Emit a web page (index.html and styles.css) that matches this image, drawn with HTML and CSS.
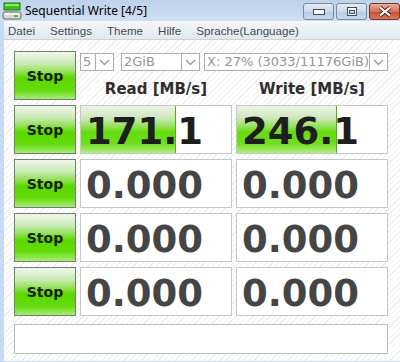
FILE: index.html
```html
<!DOCTYPE html>
<html lang="de">
<head>
    <meta charset="UTF-8">
    <title>Sequential Write [4/5]</title>
    <link rel="stylesheet" href="styles.css">
</head>
<body>
    <div class="titlebar">
        <svg class="app-icon" width="20" height="18" viewBox="0 0 20 18">
            <rect x="2" y="1" width="16" height="7" fill="#3cbf1c" stroke="#1f7a10"/>
            <rect x="3" y="2" width="14" height="2" fill="#8fe86a"/>
            <rect x="1" y="10" width="18" height="7" rx="2" fill="#d6d6d6" stroke="#6a6a6a"/>
            <rect x="2" y="11" width="16" height="2" fill="#f4f4f4"/>
            <rect x="12" y="13" width="4" height="2" fill="#3fcf20"/>
        </svg>
        <span class="title-text">Sequential Write [4/5]</span>
        <div class="winbtns">
            <div class="winbtn">
                <svg width="12" height="6" viewBox="0 0 12 6"><rect x="0.5" y="0.5" width="11" height="5" fill="#fff" stroke="#3b4a5e"/></svg>
            </div>
            <div class="winbtn">
                <svg width="10" height="9" viewBox="0 0 10 9"><rect x="0.5" y="0.5" width="9" height="8" fill="#fff" stroke="#3b4a5e"/><rect x="2.5" y="3.5" width="5" height="3" fill="#c9d7e8" stroke="#3b4a5e"/></svg>
            </div>
            <div class="winbtn close">
                <svg width="14" height="11" viewBox="0 0 14 11"><path d="M2 1.5 L12 9.5 M12 1.5 L2 9.5" stroke="#5a2018" stroke-width="4"/><path d="M2 1.5 L12 9.5 M12 1.5 L2 9.5" stroke="#fff" stroke-width="2.2"/></svg>
            </div>
        </div>
    </div>

    <div class="frame">
        <div class="menubar">
            <span>Datei</span>
            <span>Settings</span>
            <span>Theme</span>
            <span>Hilfe</span>
            <span>Sprache(Language)</span>
        </div>

        <div class="content">
            <div class="grid">
                <div class="stop">Stop</div>
                <div class="head">
                    <div class="combos">
                        <div class="combo c-count"><span class="combo-text">5</span><span class="combo-arrow"><svg width="11" height="7" viewBox="0 0 11 7"><path d="M1 1 L5.5 5.5 L10 1" fill="none" stroke="#9a9a9a" stroke-width="1.4"/></svg></span></div>
                        <div class="combo c-size"><span class="combo-text">2GiB</span><span class="combo-arrow"><svg width="11" height="7" viewBox="0 0 11 7"><path d="M1 1 L5.5 5.5 L10 1" fill="none" stroke="#9a9a9a" stroke-width="1.4"/></svg></span></div>
                        <div class="combo c-drive"><span class="combo-text">X: 27% (3033/11176GiB)</span><span class="combo-arrow"><svg width="11" height="7" viewBox="0 0 11 7"><path d="M1 1 L5.5 5.5 L10 1" fill="none" stroke="#9a9a9a" stroke-width="1.4"/></svg></span></div>
                    </div>
                    <div class="labels">
                        <span>Read [MB/s]</span>
                        <span>Write [MB/s]</span>
                    </div>
                </div>

                <div class="stop">Stop</div>
                <div class="cell"><div class="bar" style="width: 63.5%"></div><span class="value active">171.1</span></div>
                <div class="cell"><div class="bar" style="width: 66.5%"></div><span class="value active">246.1</span></div>

                <div class="stop">Stop</div>
                <div class="cell"><span class="value">0.000</span></div>
                <div class="cell"><span class="value">0.000</span></div>

                <div class="stop">Stop</div>
                <div class="cell"><span class="value">0.000</span></div>
                <div class="cell"><span class="value">0.000</span></div>

                <div class="stop">Stop</div>
                <div class="cell"><span class="value">0.000</span></div>
                <div class="cell"><span class="value">0.000</span></div>
            </div>
            <div class="comment"></div>
        </div>
    </div>
</body>
</html>
```

FILE: styles.css
```css
body {
    margin: 0;
    width: 400px;
    height: 362px;
    overflow: hidden;
    background-color: #c6daf1;
    font-family: "DejaVu Sans", sans-serif;
}
.titlebar {
    height: 21px;
    display: flex;
    align-items: center;
    background: linear-gradient(#bdd2eb, #cfdff2);
    padding-left: 2px;
}
.title-text {
    margin-left: 3px;
    font-family: "Noto Sans", sans-serif;
    font-size: 12px;
    color: #000;
}
.winbtns {
    margin-left: auto;
    align-self: flex-start;
    margin-top: 3px;
    display: flex;
    gap: 2px;
}
.winbtn {
    width: 29px;
    height: 15px;
    border: 1px solid #7b8ba2;
    border-radius: 3px;
    background: linear-gradient(#e4ecf6, #cad9ec 50%, #b7cbe3 51%, #c9d9ec);
    display: flex;
    align-items: center;
    justify-content: center;
}
.winbtn.close {
    border-color: #7a3328;
    background: linear-gradient(#eba999, #d9735c 50%, #c84d33 51%, #d6775e);
}
.frame {
    margin-left: 4px;
}
.menubar {
    height: 17px;
    border-top: 1px solid #f4f7fb;
    border-bottom: 1px solid #c9d3df;
    background: linear-gradient(#f3f6fa, #e1e8f0);
    display: flex;
    align-items: center;
    gap: 15px;
    padding-left: 4px;
    font-family: "Liberation Sans", sans-serif;
    font-size: 11.6px;
    color: #4a4a4a;
}
.content {
    height: 321px;
    background: repeating-linear-gradient(135deg, #ffffff 0 3px, #eeeeee 3px 4px);
    padding: 11px 0 0 10px;
    box-sizing: border-box;
}
.grid {
    display: grid;
    grid-template-columns: 62px 152px 152px;
    grid-template-rows: repeat(5, 49px);
    column-gap: 4px;
    row-gap: 5px;
}
.stop {
    box-sizing: border-box;
    border: 1px solid #6e816f;
    background: linear-gradient(#f1f6ee, #c9ebb3 25%, #86e046 45%, #5cd900 55%, #62db08 80%, #a7ec78);
    display: flex;
    align-items: center;
    justify-content: center;
    font-weight: bold;
    font-size: 14px;
    color: #1c1c1c;
}
.head {
    grid-column: 2 / 4;
    display: flex;
    flex-direction: column;
}
.combos {
    display: flex;
    margin-top: 2px;
}
.combo {
    box-sizing: border-box;
    height: 18px;
    display: flex;
    border: 1px solid #acacac;
    background: #fff;
    font-size: 13px;
    color: #959595;
}
.c-count { width: 34px; }
.c-size { width: 79px; margin-left: 7px; }
.c-drive { width: 184px; margin-left: 4px; }
.combo-text {
    flex: 1;
    padding-left: 2px;
    line-height: 16px;
    white-space: nowrap;
    overflow: hidden;
}
.combo-arrow {
    width: 17px;
    border-left: 1px solid #acacac;
    display: flex;
    align-items: center;
    justify-content: center;
}
.labels {
    display: flex;
    gap: 4px;
    margin-top: 9px;
}
.labels span {
    width: 152px;
    text-align: center;
    font-weight: bold;
    font-size: 15px;
    color: #2e2e2e;
}
.cell {
    box-sizing: border-box;
    border: 1px solid #c6c6c6;
    background: #fff;
    position: relative;
    overflow: hidden;
}
.bar {
    position: absolute;
    left: 0;
    top: 0;
    bottom: 0;
    box-sizing: border-box;
    border-right: 1px solid #4fb01c;
    background: linear-gradient(#eef2ea, #cfe7bd 25%, #8fe152 45%, #66dc0e 55%, #6fde1d 80%, #b1ee86);
}
.value {
    position: relative;
    display: block;
    padding: 2px 0 0 5px;
    line-height: 48px;
    font-weight: bold;
    font-size: 37px;
    color: #454545;
}
.value.active {
    color: #1e1e1e;
}
.comment {
    box-sizing: border-box;
    width: 374px;
    height: 30px;
    margin-top: 8px;
    border: 1px solid #bdbdbd;
    background: #fff;
}
```
